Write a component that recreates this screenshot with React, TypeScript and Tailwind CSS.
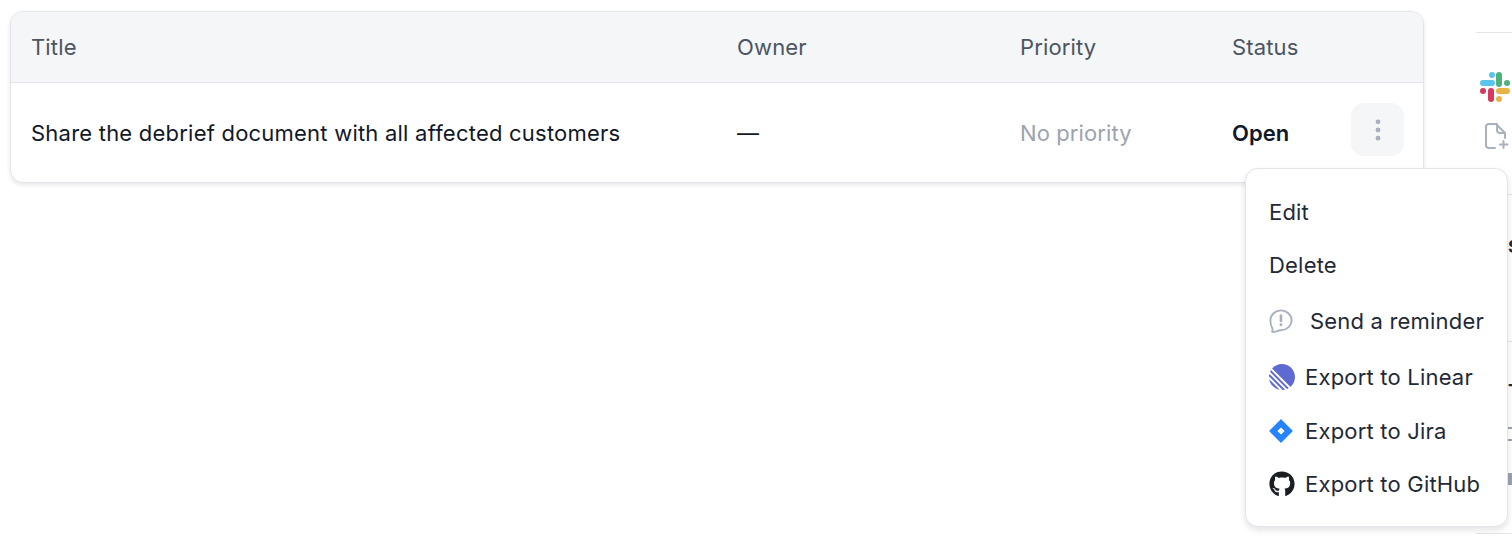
import { MoreVertical } from 'lucide-react'
import { FaGithub } from 'react-icons/fa'

const COLUMNS = [
  { label: 'Title', width: 'w-[706px]' },
  { label: 'Owner', width: 'w-[283px]' },
  { label: 'Priority', width: 'w-[212px]' },
  { label: 'Status', width: 'flex-1' },
]

function SlackLogo() {
  return (
    <svg width="30" height="30" viewBox="0 0 30 30" className="block">
      <rect x="9" y="0" width="6" height="6" rx="3" fill="#5bc4ec" />
      <rect x="0" y="8" width="15" height="6" rx="3" fill="#5bc4ec" />
      <rect x="16" y="0" width="6" height="15" rx="3" fill="#4fb27d" />
      <rect x="24" y="8" width="6" height="6" rx="3" fill="#4fb27d" />
      <rect x="16" y="16" width="14" height="6" rx="3" fill="#e8b445" />
      <rect x="16" y="24" width="6" height="6" rx="3" fill="#e8b445" />
      <rect x="8" y="16" width="6" height="14" rx="3" fill="#d63a5e" />
      <rect x="0" y="16" width="6" height="6" rx="3" fill="#d63a5e" />
    </svg>
  )
}

function FilePlusIcon() {
  return (
    <svg width="24" height="26" viewBox="0 0 24 26" fill="none" stroke="#a9b1bd" strokeWidth="2" strokeLinecap="round" strokeLinejoin="round" className="block">
      <path d="M10 25H4a3 3 0 0 1-3-3V4a3 3 0 0 1 3-3h7l9 9v5" />
      <path d="M12 1v6a3 3 0 0 0 3 3h5" />
      <path d="M18.500 18v7M15 21.500h7.500" />
    </svg>
  )
}

function ReminderIcon() {
  return (
    <svg width="26" height="26" viewBox="0 0 26 26" fill="none" className="block">
      <path d="M13 1.500c6.100 0 11.500 4.700 11.500 10.800S19.100 23 13 23c-1.500 0-3 .3-4.400.9-1.500.6-3.100 1.100-4.300 1.100-.8 0-1.100-.6-.8-1.300.4-.8.5-1.700.2-2.500C2.200 18.900 1.500 15.500 1.500 12.300 1.500 6.200 6.900 1.500 13 1.500z" stroke="#a9b1bd" strokeWidth="2" strokeLinejoin="round" />
      <path d="M13 7v6" stroke="#a9b1bd" strokeWidth="2.800" strokeLinecap="round" />
      <circle cx="13" cy="17" r="1.600" fill="#a9b1bd" />
    </svg>
  )
}

function LinearLogo() {
  return (
    <svg width="26" height="26" viewBox="0 0 100 100" className="block">
      <path fill="#5e6ad2" d="M1.200 61.500c-.2-.9.800-1.400 1.500-.8l36.600 36.600c.6.700.1 1.700-.8 1.500C20.100 94.500 5.500 79.900 1.200 61.500Z" />
      <path fill="#5e6ad2" d="M0 46.900c0 .3.100.6.300.8l52 52c.2.200.5.300.8.300 2.400-.1 4.700-.4 7-.9.800-.2 1-1.100.5-1.700L2.600 39.400c-.6-.5-1.500-.3-1.700.5-.5 2.300-.8 4.600-.9 7Z" />
      <path fill="#5e6ad2" d="M4.200 29.700c-.2.400-.1.800.2 1.100l65 65c.3.300.7.400 1.100.2 1.700-.8 3.400-1.600 5-2.600.5-.3.600-1 .2-1.500L8.300 24.500c-.4-.4-1.100-.3-1.500.2-1 1.600-1.800 3.300-2.600 5Z" />
      <path fill="#5e6ad2" d="M12.700 18.100c-.4-.4-.4-1 0-1.400C21.800 6.400 35.200 0 50 0c27.600 0 50 22.400 50 50 0 14.800-6.400 28.200-16.700 37.300-.4.400-1 .3-1.400 0L12.700 18.100Z" />
    </svg>
  )
}

function JiraLogo() {
  return (
    <svg width="24" height="24" viewBox="0 0 24 24" className="block">
      <path fill="#2684ff" d="M12 0 .8 11.200a1.100 1.100 0 0 0 0 1.600L12 24l11.200-11.200a1.100 1.100 0 0 0 0-1.600L12 0Zm0 15.600L8.400 12 12 8.400l3.600 3.600-3.600 3.600Z" />
    </svg>
  )
}

const MENU_ITEMS = [
  { label: 'Edit', icon: null, gap: '', height: 'h-[53px]' },
  { label: 'Delete', icon: null, gap: '', height: 'h-[53px]' },
  { label: 'Send a reminder', icon: <ReminderIcon />, gap: 'gap-[17px]', height: 'h-[58px]' },
  { label: 'Export to Linear', icon: <LinearLogo />, gap: 'gap-[10px]', height: 'h-[54px]' },
  { label: 'Export to Jira', icon: <JiraLogo />, gap: 'gap-3', height: 'h-[54px]' },
  { label: 'Export to GitHub', icon: <FaGithub size={26} color="#1b1f23" />, gap: 'gap-[10px]', height: 'h-[52px]' },
]

export default function App() {
  return (
    <div className="relative flex h-[546px] w-[1512px] overflow-hidden bg-white font-['Inter',sans-serif] text-[22px]">
      <div className="w-[1476px] shrink-0 pl-[10px] pt-[11px]">
        {/* Action items table */}
        <div className="w-[1414px] overflow-hidden rounded-[13px] border border-[#e3e5ea] bg-white shadow-[0_2px_4px_rgba(17,24,39,0.1)]">
          <div className="flex h-[71px] items-center border-b border-[#e3e5ea] bg-[#f5f6f8] pl-5 tracking-[0.15px] text-[#4b5563]">
            {COLUMNS.map((col) => (
              <div key={col.label} className={col.width}>{col.label}</div>
            ))}
          </div>
          <div className="flex h-[99px] items-center pl-5 pr-[19px]">
            <div className="w-[706px] pt-[2px] tracking-[0.22px] text-[#111827]">Share the debrief document with all affected customers</div>
            <div className="w-[283px] pt-[2px] text-[#111827]">—</div>
            <div className="w-[212px] pt-[2px] tracking-[0.1px] text-[#9ca3af]">No priority</div>
            <div className="flex-1 pt-[2px] font-semibold text-[#111827]">Open</div>
            <button className="mb-[6px] flex h-[53px] w-[53px] items-center justify-center rounded-[13px] bg-[#f5f6f8] text-[#a9b1bd]">
              <MoreVertical size={28} strokeWidth={2.200} />
            </button>
          </div>
        </div>
      </div>

      {/* Sidebar peeking in at the right edge, mostly hidden by the menu */}
      <div className="flex-1 pt-[32px]">
        <div className="h-[163px] border-y border-[#e3e5ea] pl-[4px] pt-[39px]">
          <SlackLogo />
          <div className="mt-[21px] pl-[5px]">
            <FilePlusIcon />
          </div>
        </div>
        <div className="h-[147px] border-b border-[#e3e5ea] pl-[32px] pt-[41px] text-[18px] leading-[22px] font-bold text-[#1f2937]">
          Slack
        </div>
        <div className="h-[192px] border-b border-[#e3e5ea] pl-[32px] pt-[39px]">
          <div className="text-[18px] leading-[20px] font-bold text-[#1f2937]">To</div>
          <div className="mt-[26px] h-[2px] w-[4px] bg-[#9ca3af]" />
          <div className="mt-[10px] h-[2px] w-[4px] bg-[#9ca3af]" />
          <div className="mt-[32px] h-[12px] w-[4px] bg-[#9ca3af]" />
        </div>
      </div>

      {/* Row actions menu */}
      <div className="absolute left-[1245px] top-[168px] h-[359px] w-[263px] rounded-[13px] border border-[#e3e5ea] bg-white px-[23px] pt-[17px] tracking-[0.2px] shadow-[0_3px_6px_rgba(17,24,39,0.12)]">
        {MENU_ITEMS.map((item) => (
          <div key={item.label} className={`flex items-center whitespace-nowrap text-[#1f2937] ${item.height} ${item.gap}`}>
            {item.icon}
            <span>{item.label}</span>
          </div>
        ))}
      </div>
    </div>
  )
}
